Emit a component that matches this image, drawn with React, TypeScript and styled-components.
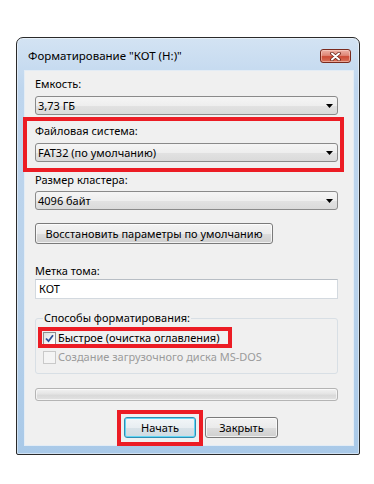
import React from "react";
import styled, { createGlobalStyle } from "styled-components";

const GlobalStyle = createGlobalStyle`
  body {
    margin: 0;
    background: #fff;
    font-family: "Noto Sans", "Open Sans", sans-serif;
    font-size: 11px;
    color: #000;
  }
  * {
    box-sizing: border-box;
  }
`;

const ComboArrow = () => (
  <svg width="7" height="4" viewBox="0 0 7 4">
    <path d="M0 0 H7 L3.5 4 Z" fill="#000" />
  </svg>
);

const CloseGlyph = () => (
  <svg width="11" height="9" viewBox="0 0 11 9">
    <path d="M2 1.5 L9 7.5 M9 1.5 L2 7.5" stroke="#6a2418" strokeWidth="3.6" strokeLinecap="round" />
    <path d="M2 1.5 L9 7.5 M9 1.5 L2 7.5" stroke="#fff" strokeWidth="2" strokeLinecap="round" />
  </svg>
);

const CheckMark = () => (
  <svg width="9" height="9" viewBox="0 0 9 9">
    <path d="M1 4.5 L3.5 7.2 L8 1.2" stroke="#2b4f9a" strokeWidth="1.8" fill="none" />
  </svg>
);

const App: React.FC = () => {
  return (
    <Page>
      <GlobalStyle />
      <Window>
        <TitleBar>
          <Title>Форматирование "КОТ (H:)"</Title>
          <CloseButton>
            <CloseGlyph />
          </CloseButton>
        </TitleBar>
        <Client>
          <Field>
            <Label>Емкость:</Label>
            <Combo $gap={4}>
              <span>3,73 ГБ</span>
              <ComboArrow />
            </Combo>
          </Field>

          <Highlight $inset="-6px -6px -10px -12px" $top={8}>
            <Field>
              <Label>Файловая система:</Label>
              <Combo $gap={4}>
                <span>FAT32 (по умолчанию)</span>
                <ComboArrow />
              </Combo>
            </Field>
          </Highlight>

          <Field $top={10}>
            <Label>Размер кластера:</Label>
            <Combo $gap={3}>
              <span>4096 байт</span>
              <ComboArrow />
            </Combo>
          </Field>

          <RestoreButton>Восстановить параметры по умолчанию</RestoreButton>

          <Field $top={19}>
            <Label>Метка тома:</Label>
            <TextInput>КОТ</TextInput>
          </Field>

          <Group>
            <Legend>Способы форматирования:</Legend>
            <Highlight $inset="-3px -12px -2px -5px" $fit>
              <CheckRow>
                <CheckBox $checked>
                  <CheckMark />
                </CheckBox>
                <span>Быстрое (очистка оглавления)</span>
              </CheckRow>
            </Highlight>
            <CheckRow $disabled $top={3}>
              <CheckBox $disabled />
              <span>Создание загрузочного диска MS-DOS</span>
            </CheckRow>
          </Group>

          <Progress />

          <ButtonRow>
            <Highlight $inset="-7px -7px -8px -7px" $fit>
              <DialogButton $default>Начать</DialogButton>
            </Highlight>
            <DialogButton>Закрыть</DialogButton>
          </ButtonRow>
        </Client>
      </Window>
    </Page>
  );
};

const Page = styled.div`
  padding: 37px 0 0 16px;
`;

const Window = styled.div`
  width: 344px;
  border: 1px solid #2a2a2a;
  border-radius: 7px 7px 2px 2px;
  padding: 0 5px 8px 7px;
  background: linear-gradient(to bottom, #d3e3f3 0%, #bfd6ee 12%, #b9d2eb 60%, #a9c9e8 100%);
  box-shadow: inset 0 0 0 1px rgba(255, 255, 255, 0.45);
`;

const TitleBar = styled.div`
  height: 32px;
  padding: 4px 3px 0 4px;
  display: flex;
  align-items: center;
  justify-content: space-between;
`;

const Title = styled.div`
  font-size: 11.5px;
  line-height: 16px;
  color: #000;
`;

const CloseButton = styled.div`
  width: 31px;
  height: 14px;
  border: 1px solid #7a2a1e;
  border-radius: 3px;
  display: flex;
  align-items: center;
  justify-content: center;
  background: linear-gradient(to bottom, #eeb2a6 0%, #df8777 45%, #cc4b35 55%, #d8735c 100%);
  box-shadow: inset 0 0 0 1px rgba(255, 220, 210, 0.5);
`;

const Client = styled.div`
  background: #f0f0f0;
  border: 1px solid #e3ecf5;
  padding: 5px 15px 7px 10px;
  display: flex;
  flex-direction: column;
`;

const Field = styled.div<{ $top?: number }>`
  display: flex;
  flex-direction: column;
  margin-top: ${p => p.$top || 0}px;
`;

const Label = styled.div`
  line-height: 16px;
`;

const Highlight = styled.div<{ $inset: string; $top?: number; $fit?: boolean }>`
  position: relative;
  margin-top: ${p => p.$top || 0}px;
  width: ${p => (p.$fit ? "fit-content" : "auto")};
  &::after {
    content: "";
    position: absolute;
    inset: ${p => p.$inset};
    border: 4px solid #ec1c24;
    pointer-events: none;
    z-index: 1;
  }
`;

const Combo = styled.div<{ $gap: number }>`
  margin-top: ${p => p.$gap}px;
  height: 19px;
  border: 1px solid #8a8a8a;
  border-radius: 3px;
  padding: 0 4px 0 2px;
  display: flex;
  align-items: center;
  justify-content: space-between;
  line-height: 16px;
  background: linear-gradient(to bottom, #f5f5f5 0%, #eeeeee 50%, #e2e2e2 51%, #dadada 100%);
`;

const RestoreButton = styled.div`
  margin-top: 13px;
  width: 238px;
  height: 21px;
  border: 1px solid #7a7a7a;
  border-radius: 3px;
  display: flex;
  align-items: center;
  justify-content: center;
  white-space: nowrap;
  background: linear-gradient(to bottom, #f3f3f3 0%, #ebebeb 50%, #dddddd 51%, #cfcfcf 100%);
  box-shadow: inset 0 0 0 1px rgba(255, 255, 255, 0.7);
`;

const TextInput = styled.div`
  height: 20px;
  background: #fff;
  border: 1px solid #d3d9df;
  border-top-color: #b8bec5;
  padding: 0 3px;
  display: flex;
  align-items: center;
  line-height: 16px;
`;

const Group = styled.fieldset`
  margin: 11px 0 0;
  min-width: 0;
  border: 1px solid #d8dfe5;
  border-radius: 3px;
  padding: 4px 7px 8px 7px;
`;

const Legend = styled.legend`
  padding: 0 1px;
  line-height: 16px;
`;

const CheckRow = styled.div<{ $disabled?: boolean; $top?: number }>`
  display: flex;
  align-items: center;
  gap: 2px;
  line-height: 16px;
  white-space: nowrap;
  margin-top: ${p => p.$top || 0}px;
  color: ${p => (p.$disabled ? "#9b9b9b" : "#000")};
`;

const CheckBox = styled.div<{ $checked?: boolean; $disabled?: boolean }>`
  width: 13px;
  height: 13px;
  border: 1px solid ${p => (p.$disabled ? "#c9c9c9" : "#8e8f8f")};
  background: ${p =>
    p.$disabled ? "#f4f4f4" : "linear-gradient(135deg, #dcdcdc 0%, #f6f6f6 60%, #ffffff 100%)"};
  display: flex;
  align-items: center;
  justify-content: center;
`;

const Progress = styled.div`
  margin-top: 14px;
  height: 13px;
  border: 1px solid #b4b4b4;
  border-radius: 3px;
  background: linear-gradient(to bottom, #f2f2f2 0%, #e6e6e6 40%, #d9d9d9 60%, #e3e3e3 100%);
  box-shadow: inset 0 0 0 1px rgba(255, 255, 255, 0.6);
`;

const ButtonRow = styled.div`
  margin-top: 16px;
  padding-left: 89px;
  display: flex;
  gap: 9px;
`;

const DialogButton = styled.div<{ $default?: boolean }>`
  width: ${p => (p.$default ? 72 : 73)}px;
  height: 21px;
  border: 1px solid ${p => (p.$default ? "#2f8db3" : "#7a7a7a")};
  border-radius: 3px;
  display: flex;
  align-items: center;
  justify-content: center;
  background: ${p =>
    p.$default
      ? "linear-gradient(to bottom, #f2f6f8 0%, #e8eef2 50%, #d8e2e8 51%, #cfdbe2 100%)"
      : "linear-gradient(to bottom, #f3f3f3 0%, #ebebeb 50%, #dddddd 51%, #cfcfcf 100%)"};
  box-shadow: ${p =>
    p.$default ? "inset 0 0 0 1px #62d6f4" : "inset 0 0 0 1px rgba(255, 255, 255, 0.7)"};
`;

export default App;
